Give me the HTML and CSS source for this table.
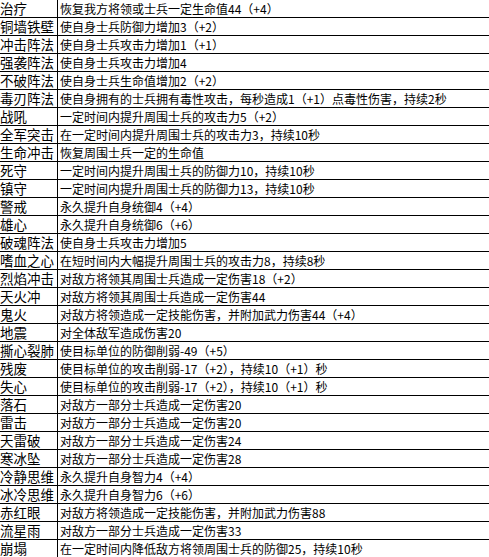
FILE: index.html
```html
<!DOCTYPE html>
<html lang="zh">
<head>
<meta charset="utf-8">
<link rel="stylesheet" href="styles.css">
</head>
<body>
<div class="skills">
  <div class="row"><div class="name">治疗</div><div class="desc">恢复我方将领或士兵一定生命值44（+4）</div></div>
  <div class="row"><div class="name">铜墙铁壁</div><div class="desc">使自身士兵防御力增加3（+2）</div></div>
  <div class="row"><div class="name">冲击阵法</div><div class="desc">使自身士兵攻击力增加1（+1）</div></div>
  <div class="row"><div class="name">强袭阵法</div><div class="desc">使自身士兵攻击力增加4</div></div>
  <div class="row"><div class="name">不破阵法</div><div class="desc">使自身士兵生命值增加2（+2）</div></div>
  <div class="row"><div class="name">毒刃阵法</div><div class="desc">使自身拥有的士兵拥有毒性攻击，每秒造成1（+1）点毒性伤害，持续2秒</div></div>
  <div class="row"><div class="name">战吼</div><div class="desc">一定时间内提升周围士兵的攻击力5（+2）</div></div>
  <div class="row"><div class="name">全军突击</div><div class="desc">在一定时间内提升周围士兵的攻击力3，持续10秒</div></div>
  <div class="row"><div class="name">生命冲击</div><div class="desc">恢复周围士兵一定的生命值</div></div>
  <div class="row"><div class="name">死守</div><div class="desc">一定时间内提升周围士兵的防御力10，持续10秒</div></div>
  <div class="row"><div class="name">镇守</div><div class="desc">一定时间内提升周围士兵的防御力13，持续10秒</div></div>
  <div class="row"><div class="name">警戒</div><div class="desc">永久提升自身统御4（+4）</div></div>
  <div class="row"><div class="name">雄心</div><div class="desc">永久提升自身统御6（+6）</div></div>
  <div class="row"><div class="name">破魂阵法</div><div class="desc">使自身士兵攻击力增加5</div></div>
  <div class="row"><div class="name">嗜血之心</div><div class="desc">在短时间内大幅提升周围士兵的攻击力8，持续8秒</div></div>
  <div class="row"><div class="name">烈焰冲击</div><div class="desc">对敌方将领其周围士兵造成一定伤害18（+2）</div></div>
  <div class="row"><div class="name">天火冲</div><div class="desc">对敌方将领其周围士兵造成一定伤害44</div></div>
  <div class="row"><div class="name">鬼火</div><div class="desc">对敌方将领造成一定技能伤害，并附加武力伤害44（+4）</div></div>
  <div class="row"><div class="name">地震</div><div class="desc">对全体敌军造成伤害20</div></div>
  <div class="row"><div class="name">撕心裂肺</div><div class="desc">使目标单位的防御削弱-49（+5）</div></div>
  <div class="row"><div class="name">残废</div><div class="desc">使目标单位的攻击削弱-17（+2），持续10（+1）秒</div></div>
  <div class="row"><div class="name">失心</div><div class="desc">使目标单位的攻击削弱-17（+2），持续10（+1）秒</div></div>
  <div class="row"><div class="name">落石</div><div class="desc">对敌方一部分士兵造成一定伤害20</div></div>
  <div class="row"><div class="name">雷击</div><div class="desc">对敌方一部分士兵造成一定伤害20</div></div>
  <div class="row"><div class="name">天雷破</div><div class="desc">对敌方一部分士兵造成一定伤害24</div></div>
  <div class="row"><div class="name">寒冰坠</div><div class="desc">对敌方一部分士兵造成一定伤害28</div></div>
  <div class="row"><div class="name">冷静思维</div><div class="desc">永久提升自身智力4（+4）</div></div>
  <div class="row"><div class="name">冰冷思维</div><div class="desc">永久提升自身智力6（+6）</div></div>
  <div class="row"><div class="name">赤红眼</div><div class="desc">对敌方将领造成一定技能伤害，并附加武力伤害88</div></div>
  <div class="row"><div class="name">流星雨</div><div class="desc">对敌方一部分士兵造成一定伤害33</div></div>
  <div class="row"><div class="name">崩塌</div><div class="desc">在一定时间内降低敌方将领周围士兵的防御25，持续10秒</div></div>
</div>
</body>
</html>
```
FILE: styles.css
```css
html, body {
  margin: 0;
  padding: 0;
  background: #fff;
}

.skills {
  width: 489px;
  font-family: "Noto Sans CJK SC", "Noto Sans", sans-serif;
  color: #000;
}

.row {
  display: grid;
  grid-template-columns: 58px 1fr;
  height: 18px;
  box-sizing: border-box;
  border-bottom: 1px solid #000;
}

.name {
  box-sizing: border-box;
  border-right: 1px solid #000;
  font-size: 13.5px;
  line-height: 17px;
  white-space: nowrap;
}

.desc {
  font-size: 12px;
  line-height: 17px;
  padding-left: 2px;
  white-space: nowrap;
}
```
